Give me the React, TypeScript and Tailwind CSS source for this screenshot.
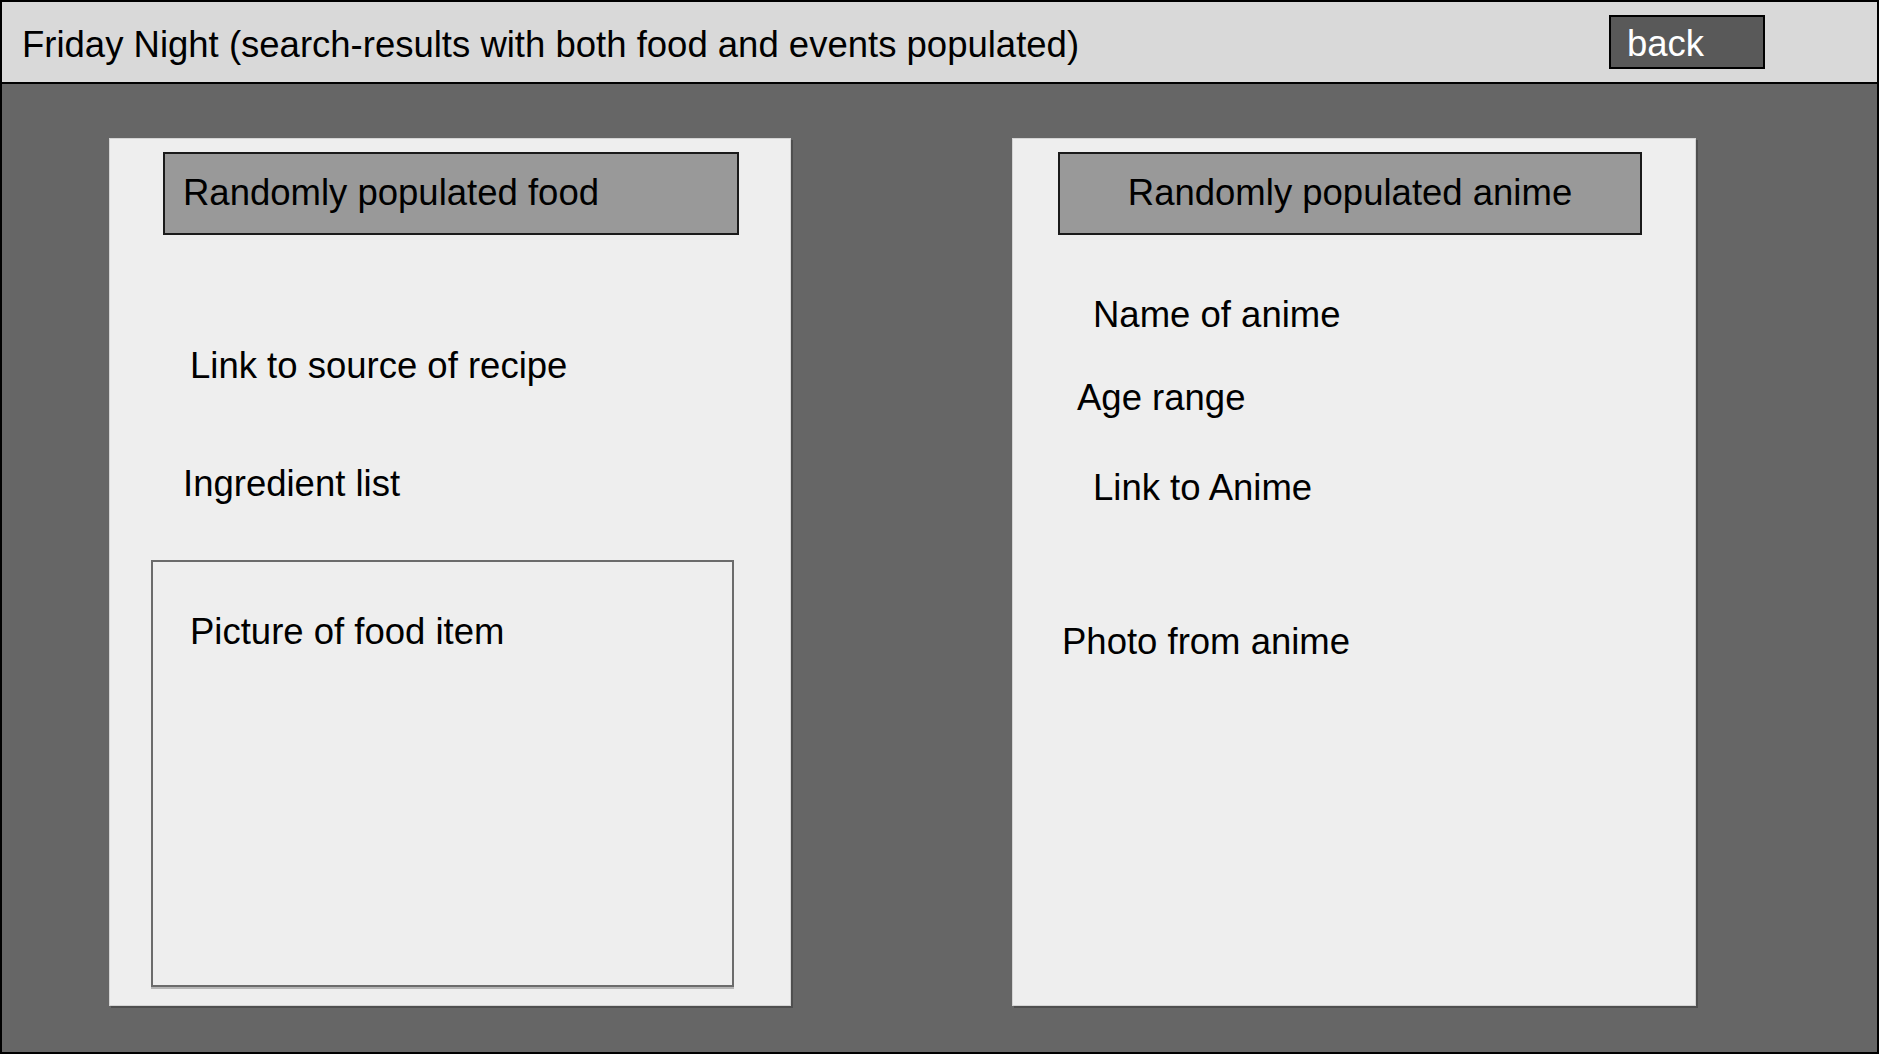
import React from "react";

const font = { fontFamily: "'Liberation Sans', Arial, sans-serif" };

const FoodCard = () => (
  <div className="w-[682px] h-[868px] bg-[#eeeeee] border border-[#d4d4d4] shadow-[2px_2px_0_#4f4f4f] flex flex-col">
    <div className="mt-[13px] ml-[53px] w-[576px] h-[83px] bg-[#999999] border-2 border-[#1a1a1a] flex items-center pl-[18px] text-[36.5px] text-black">
      Randomly populated food
    </div>
    <div className="mt-[110px] ml-[80px] text-[36.5px] leading-[42px] text-black">Link to source of recipe</div>
    <div className="mt-[76px] ml-[73px] text-[36.5px] leading-[42px] text-black">Ingredient list</div>
    <div className="mt-[55px] ml-[41px] w-[583px] h-[427px] border-2 border-[#6b6b6b] shadow-[0_2px_0_#b5b5b5] pt-[49px] pl-[37px]">
      <div className="text-[36.5px] leading-[42px] text-black">Picture of food item</div>
    </div>
  </div>
);

const AnimeCard = () => (
  <div className="w-[684px] h-[868px] bg-[#eeeeee] border border-[#d4d4d4] shadow-[2px_2px_0_#4f4f4f] flex flex-col">
    <div className="mt-[13px] ml-[45px] w-[584px] h-[83px] bg-[#999999] border-2 border-[#1a1a1a] flex items-center justify-center text-[36.5px] text-black">
      Randomly populated anime
    </div>
    <div className="mt-[59px] ml-[80px] text-[36.5px] leading-[42px] text-black">Name of anime</div>
    <div className="mt-[41px] ml-[64px] text-[36.5px] leading-[42px] text-black">Age range</div>
    <div className="mt-[48px] ml-[80px] text-[36.5px] leading-[42px] text-black">Link to Anime</div>
    <div className="mt-[112px] ml-[49px] text-[36.5px] leading-[42px] text-black">Photo from anime</div>
  </div>
);

export default function App() {
  return (
    <div className="w-[1881px] h-[1055px] bg-white" style={font}>
      <div className="w-[1879px] h-[1054px] border-2 border-black flex flex-col">
        <div className="h-[82px] shrink-0 bg-[#d9d9d9] border-b-2 border-black flex items-center justify-between pl-[20px] pr-[112px]">
          <span className="text-[36.5px] text-black pt-[6px]">Friday Night (search-results with both food and events populated)</span>
          <button className="w-[156px] h-[54px] bg-[#595959] border-2 border-black text-white text-[36.5px] text-left pl-[16px]">
            back
          </button>
        </div>
        <div className="flex-1 bg-[#666666] flex items-start pt-[54px] pl-[107px] gap-[221px]">
          <FoodCard />
          <AnimeCard />
        </div>
      </div>
    </div>
  );
}
